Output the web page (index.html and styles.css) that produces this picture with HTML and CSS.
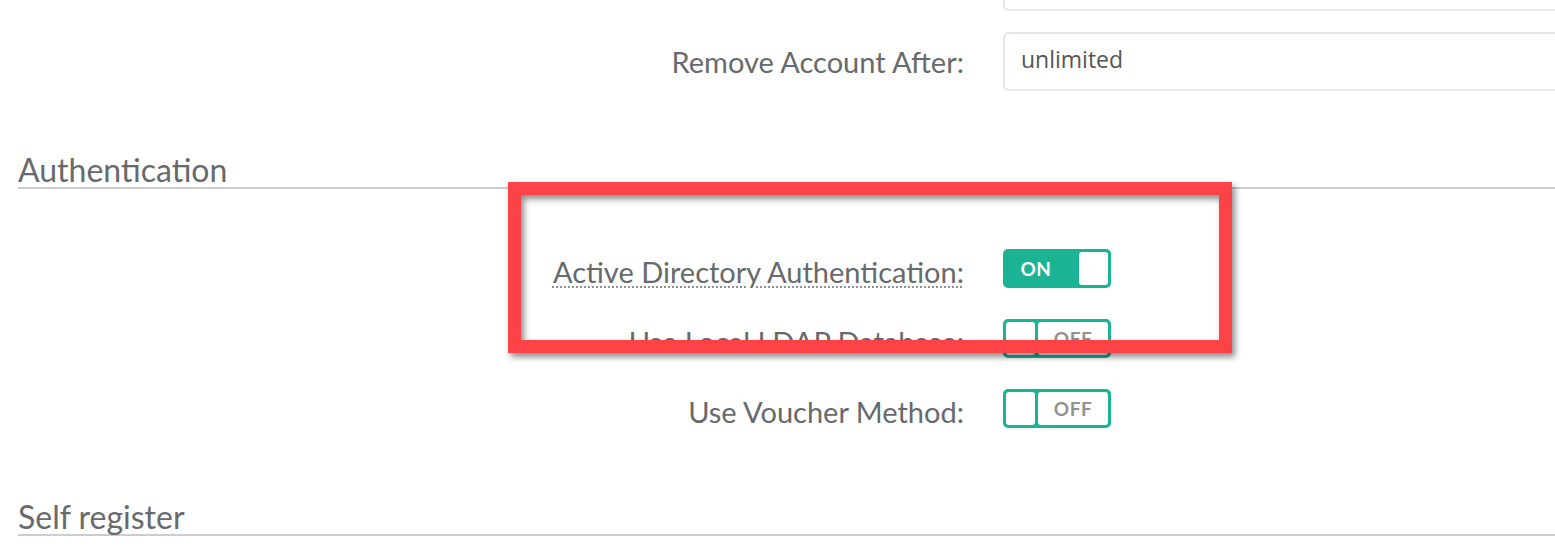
FILE: index.html
```html
<!DOCTYPE html>
<html lang="en">
<head>
    <meta charset="UTF-8">
    <meta name="viewport" content="width=device-width, initial-scale=1.0">
    <title>Guest Settings</title>
    <link rel="stylesheet" href="styles.css">
</head>
<body>

<div class="page">
    <div class="form-row">
        <label class="row-label"></label>
        <div class="row-control">
            <input type="text" class="text-input" value="">
        </div>
    </div>

    <div class="form-row">
        <label class="row-label" for="remove-after">Remove Account After:</label>
        <div class="row-control">
            <input type="text" id="remove-after" class="text-input" value="unlimited">
        </div>
    </div>

    <h2 class="section-title">Authentication</h2>

    <div class="switch-rows">
        <div class="form-row">
            <label class="row-label"><span class="hint">Active Directory Authentication:</span></label>
            <div class="row-control">
                <div class="switch is-on">
                    <span class="switch-state">ON</span>
                    <span class="switch-knob"></span>
                </div>
            </div>
        </div>

        <div class="form-row">
            <label class="row-label">Use Local LDAP Database:</label>
            <div class="row-control">
                <div class="switch">
                    <span class="switch-knob"></span>
                    <span class="switch-state">OFF</span>
                </div>
            </div>
        </div>

        <div class="form-row">
            <label class="row-label">Use Voucher Method:</label>
            <div class="row-control">
                <div class="switch">
                    <span class="switch-knob"></span>
                    <span class="switch-state">OFF</span>
                </div>
            </div>
        </div>
    </div>

    <h2 class="section-title">Self register</h2>
</div>

<!-- annotation frame drawn over the screenshot -->
<div class="highlight"></div>

</body>
</html>
```

FILE: styles.css
```css
html, body {
    margin: 0;
    height: 100%;
    overflow: hidden;
    background-color: #fff;
}

body {
    font-family: Lato, "Open Sans", sans-serif;
    color: #676a6c;
}

.page {
    margin-top: -48px;
    padding-left: 18px;
}

.form-row {
    display: grid;
    grid-template-columns: 946px 1fr;
    column-gap: 39px;
    align-items: center;
    margin-bottom: 21px;
}

.row-label {
    text-align: right;
    font-size: 29px;
    line-height: 30px;
}

.row-control {
    display: flex;
}

.text-input {
    box-sizing: border-box;
    width: 700px;
    height: 59px;
    padding: 0 16px 6px;
    border: 2px solid #e5e6e7;
    border-radius: 6px;
    font-family: "Open Sans", sans-serif;
    font-size: 23px;
    color: #555;
    outline: none;
}

.section-title {
    margin: 56px 0 0;
    padding: 7px 0 2px;
    font-size: 32px;
    font-weight: 400;
    line-height: 31px;
    border-bottom: 2px solid #ccc;
}

.switch-rows {
    display: flex;
    flex-direction: column;
    gap: 31px;
    padding: 60px 0 10px;
}

.switch-rows .form-row {
    align-items: start;
    margin-bottom: 0;
}

.switch-rows .row-label {
    padding-top: 8px;
}

.hint {
    text-decoration: underline dotted #8f9294;
    text-decoration-thickness: 2px;
    text-underline-offset: 3px;
}

.switch {
    box-sizing: border-box;
    display: flex;
    gap: 3px;
    width: 108px;
    height: 39px;
    border: 3px solid #1ab394;
    border-radius: 5px;
    background-color: #1ab394;
}

.switch-knob {
    width: 29px;
    background-color: #fff;
    border-radius: 3px;
}

.switch-state {
    flex: 1;
    display: flex;
    align-items: center;
    justify-content: center;
    font-size: 19px;
    font-weight: 700;
    letter-spacing: 0.5px;
    color: #929292;
    background-color: #fff;
    border-radius: 3px;
}

.switch.is-on .switch-state {
    padding-right: 10px;
    color: #fff;
    background-color: transparent;
}

.highlight {
    position: absolute;
    left: 508px;
    top: 182px;
    width: 698px;
    height: 145px;
    border: 13px solid #fe4346;
    filter: drop-shadow(3px 4px 3px rgba(0, 0, 0, 0.45));
}
```
